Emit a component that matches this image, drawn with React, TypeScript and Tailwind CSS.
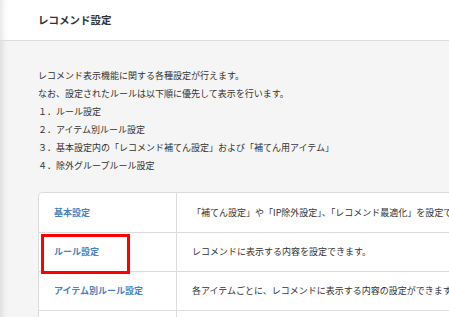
const rows = [
  {
    name: "基本設定",
    desc: "「補てん設定」や「IP除外設定」、「レコメンド最適化」を設定できます。",
  },
  { name: "ルール設定", desc: "レコメンドに表示する内容を設定できます。", marked: true },
  {
    name: "アイテム別ルール設定",
    desc: "各アイテムごとに、レコメンドに表示する内容の設定ができます。",
  },
  { name: "除外グループルール設定", desc: "レコメンドに表示しないアイテムのグループを設定できます。" },
];

const steps = [
  "１．ルール設定",
  "２．アイテム別ルール設定",
  "３．基本設定内の「レコメンド補てん設定」および「補てん用アイテム」",
  "４．除外グループルール設定",
];

const App = () => {
  return (
    <div
      className="h-[317px] w-[449px] overflow-hidden bg-[#f5f5f5] text-[#333] shadow-[inset_7px_0_6px_-5px_rgba(0,0,0,0.12)]"
      style={{ fontFamily: '"Noto Sans CJK JP", "Noto Sans", sans-serif' }}
    >
      <header className="flex h-[41px] items-center border-b border-[#dcdcdc] bg-white pl-[38px] shadow-[inset_7px_0_6px_-5px_rgba(0,0,0,0.12)]">
        <h1 className="text-[10.5px] font-bold">レコメンド設定</h1>
      </header>

      <div className="pl-[38px] pt-[26px]">
        <div className="text-[9px] leading-[18px] whitespace-nowrap">
          <p>レコメンド表示機能に関する各種設定が行えます。</p>
          <p>なお、設定されたルールは以下順に優先して表示を行います。</p>
          {steps.map((s) => (
            <p key={s}>{s}</p>
          ))}
        </div>

        <div className="mt-[17px] w-[640px] rounded-tl-[4px] border border-[#dcdcdc] bg-white">
          {rows.map((r, i) => (
            <div
              key={r.name}
              className={`flex h-[39px] ${i > 0 ? "border-t border-[#dcdcdc]" : ""}`}
            >
              <div className="relative flex w-[138px] shrink-0 items-center border-r border-[#dcdcdc] pl-[15px] text-[9px] font-bold text-[#4a7fc1]">
                {r.name}
                {r.marked && (
                  <div className="absolute left-[2px] top-[1px] h-[40px] w-[89px] border-[3px] border-[#ff0000]" />
                )}
              </div>
              <div className="flex items-center whitespace-nowrap pl-[15px] text-[9px]">
                {r.desc}
              </div>
            </div>
          ))}
        </div>
      </div>
    </div>
  );
};

export default App;
